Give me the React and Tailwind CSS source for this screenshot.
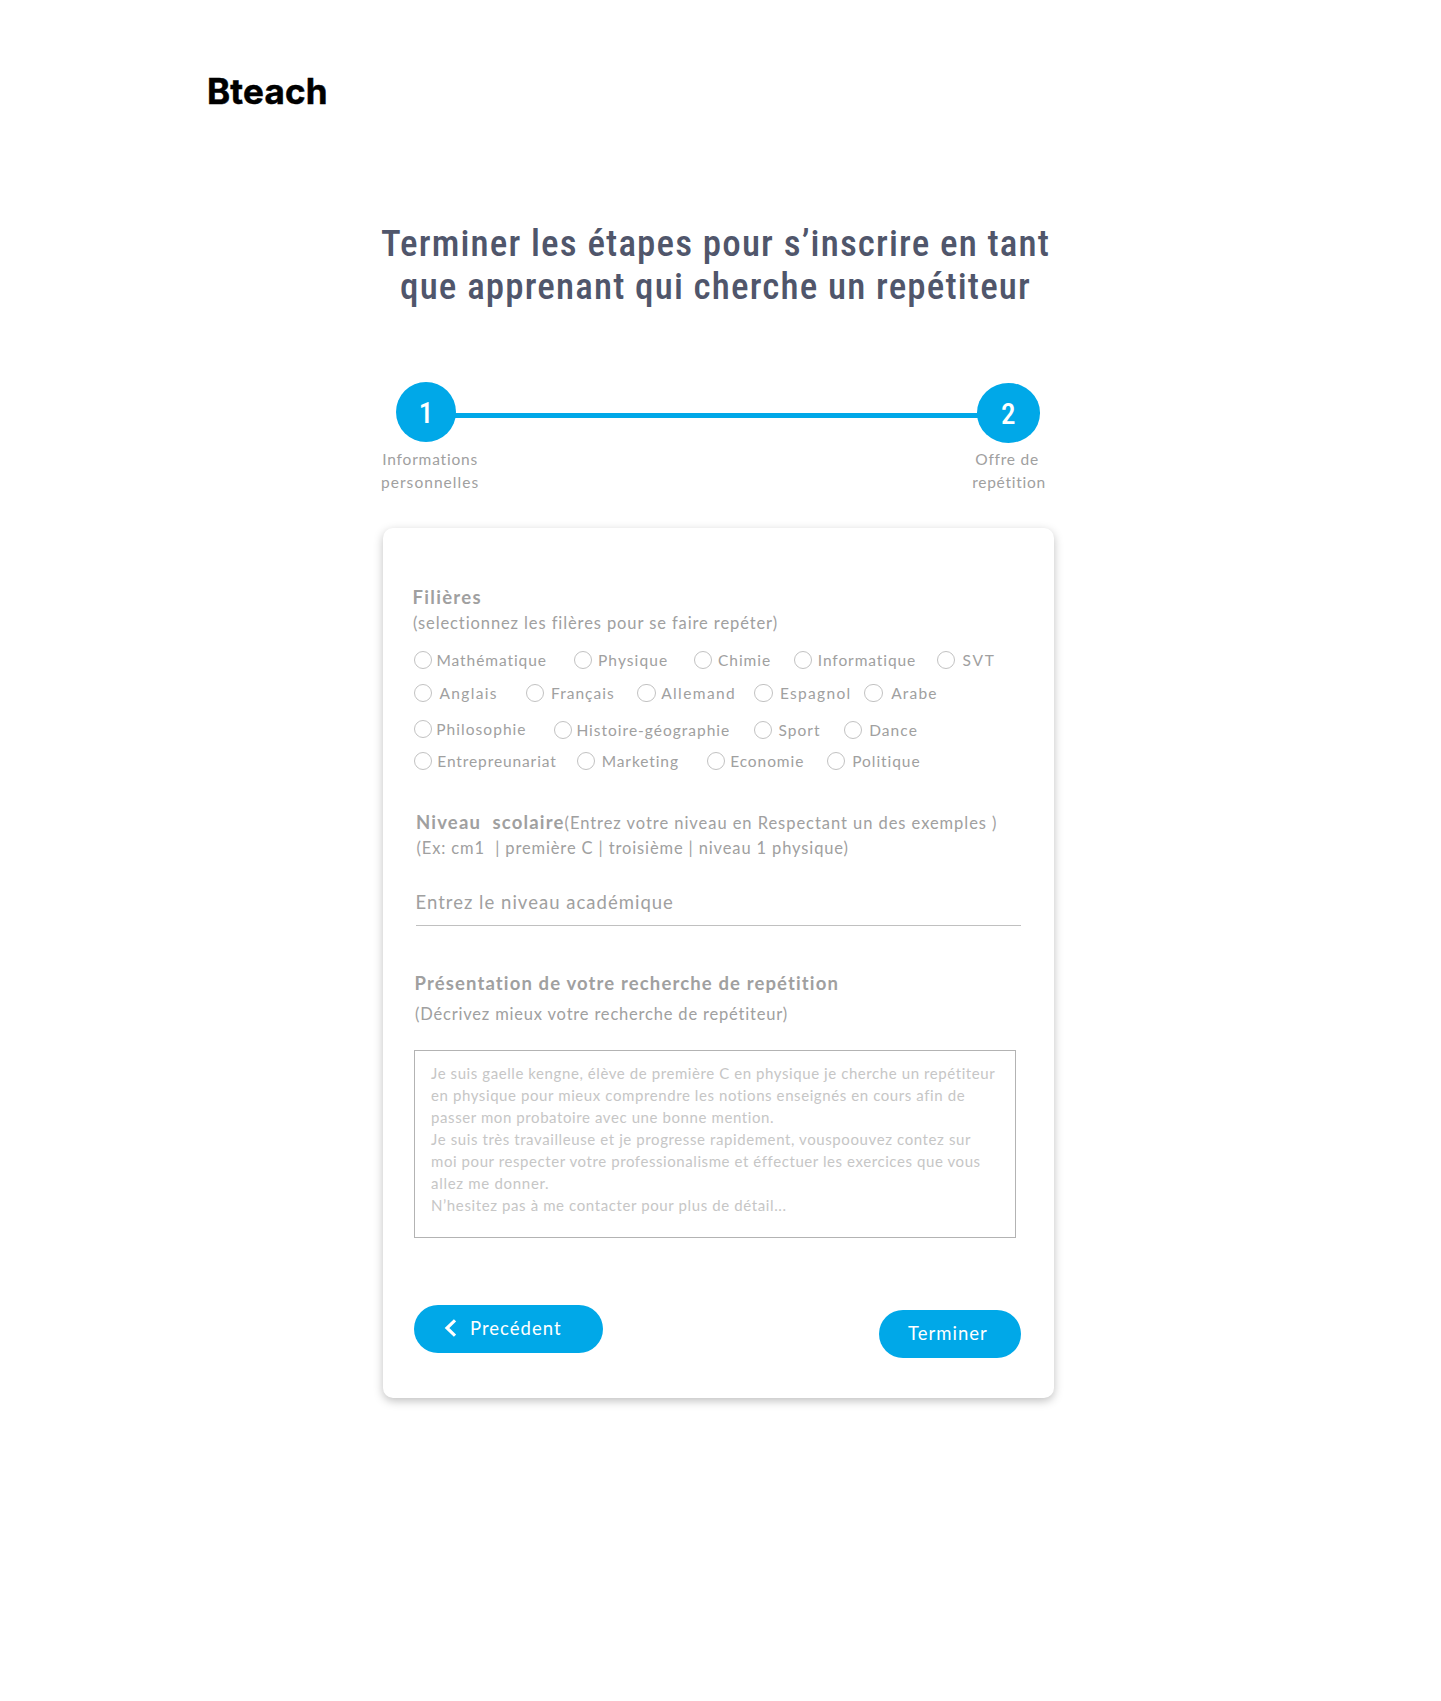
import React from "react";

const optionRows = [
  {
    className: "",
    items: [
      { label: "Mathématique", item: "w-[160px]", text: "ml-[4.5px] tracking-[0.92px]" },
      { label: "Physique", item: "w-[120px]", text: "ml-[6px] tracking-[1.08px]" },
      { label: "Chimie", item: "w-[100px]", text: "ml-[6px] tracking-[0.96px]" },
      { label: "Informatique", item: "w-[143px]", text: "ml-[5.8px] tracking-[0.9px]" },
      { label: "SVT", item: "", text: "ml-[7.5px] tracking-[1.8px]" },
    ],
  },
  {
    className: "mt-[13px]",
    items: [
      { label: "Anglais", item: "w-[112px]", text: "ml-[7.5px] tracking-[1.35px]" },
      { label: "Français", item: "w-[111.7px]", text: "ml-[7px] tracking-[1.03px]" },
      { label: "Allemand", item: "w-[117px]", text: "ml-[5.5px] tracking-[1.4px]" },
      { label: "Espagnol", item: "w-[110px]", text: "ml-[7.3px] tracking-[1.3px]" },
      { label: "Arabe", item: "", text: "ml-[8.5px] tracking-[1.2px]" },
    ],
  },
  {
    className: "mt-[16px]",
    items: [
      { label: "Philosophie", item: "w-[140.4px]", text: "ml-[4.3px] tracking-[1.04px]" },
      { label: "Histoire-géographie", item: "mt-px w-[199.8px]", text: "ml-[4px] tracking-[1px]" },
      { label: "Sport", item: "mt-px w-[90px]", text: "ml-[6.3px] tracking-[1.04px]" },
      { label: "Dance", item: "mt-px", text: "ml-[7px] tracking-[1.07px]" },
    ],
  },
  {
    className: "mt-[11px]",
    items: [
      { label: "Entrepreunariat", item: "w-[163.4px]", text: "ml-[5.3px] tracking-[0.89px]" },
      { label: "Marketing", item: "w-[130px]", text: "ml-[6.3px] tracking-[0.9px]" },
      { label: "Economie", item: "w-[120px]", text: "ml-[4.8px] tracking-[0.92px]" },
      { label: "Politique", item: "", text: "ml-[6.8px] tracking-[0.95px]" },
    ],
  },
];

const presentation = [
  { text: "Je suis gaelle kengne, élève de première C en physique je cherche un repétiteur", tracking: "tracking-[0.58px]" },
  { text: "en physique pour mieux comprendre les notions enseignés en cours afin de", tracking: "tracking-[0.59px]" },
  { text: "passer mon probatoire avec une bonne mention.", tracking: "tracking-[0.59px]" },
  { text: "Je suis très travailleuse et je progresse rapidement, vouspoouvez contez sur", tracking: "tracking-[0.6px]" },
  { text: "moi pour respecter votre professionalisme et éffectuer les exercices que vous", tracking: "tracking-[0.58px]" },
  { text: "allez me donner.", tracking: "tracking-[0.7px]" },
  { text: "N’hesitez pas à me contacter pour plus de détail...", tracking: "tracking-[0.61px]" },
];

function Option({ label, item, text }) {
  return (
    <label className={`flex h-5 shrink-0 items-center ${item}`}>
      <span className="h-[18.5px] w-[18.5px] shrink-0 rounded-full border border-[#c2c2c2]" />
      <span className={`text-[15.5px] leading-5 ${text}`}>{label}</span>
    </label>
  );
}

function Stepper() {
  return (
    <section className="mt-[74px]">
      <div className="flex items-start pl-[13px] font-['Roboto_Condensed',Roboto,sans-serif] text-[29px] font-medium text-white">
        <div className="flex h-[60px] w-[60px] items-center justify-center rounded-full bg-[#00a8e8] pt-[3px]">1</div>
        <div className="-mx-px mt-[31px] h-[5px] w-[522.5px] bg-[#00a8e8]" />
        <div className="mt-px flex h-[60px] w-[63.5px] items-center justify-center rounded-[50%] bg-[#00a8e8] pt-[3px]">2</div>
      </div>
      <div className="-ml-[2px] mt-[5px] flex justify-between text-center text-[15.5px] leading-[23px]">
        <p>
          <span className="block tracking-[0.8px]">Informations</span>
          <span className="block tracking-[1.05px]">personnelles</span>
        </p>
        <p className="mr-2">
          <span className="block pr-[4px] tracking-[0.74px]">Offre de</span>
          <span className="block tracking-[0.75px]">repétition</span>
        </p>
      </div>
    </section>
  );
}

export default function App() {
  return (
    <div className="h-[1701px] w-[1441px] overflow-hidden bg-white font-[Lato,sans-serif] text-[#a0a0a0]">
      <header className="pl-[207px] pt-[68px]">
        <div className="font-[Inter,sans-serif] text-[35px] font-bold leading-[46px] tracking-[0.2px] text-black [-webkit-text-stroke:0.5px_black]">Bteach</div>
      </header>

      <main className="ml-[383px] mt-[108px] w-[671px] whitespace-pre">
        <h1 className="-ml-[10px] w-[685px] text-center font-['Roboto_Condensed',Roboto,sans-serif] text-[37px] font-medium leading-[43px] tracking-[1.14px] text-[#50566b]">
          <span className="block">Terminer les étapes pour s’inscrire en tant</span>
          <span className="block">que apprenant qui cherche un repétiteur</span>
        </h1>

        <Stepper />

        <form className="mt-[34px] h-[870px] rounded-[10px] bg-white pl-[30.5px] pr-[33px] pt-[57px] shadow-[0_3px_10px_rgba(0,0,0,0.25)]">
          <h2 className="-ml-px text-[18.5px] font-bold leading-6 tracking-[1.3px]">Filières</h2>
          <p className="-ml-[0.5px] mt-1 text-[16.5px] leading-5 tracking-[0.9px]">(selectionnez les filères pour se faire repéter)</p>

          <div className="mt-[17px]">
            {optionRows.map((row, i) => (
              <div key={i} className={`flex items-start ${row.className}`}>
                {row.items.map((o) => (
                  <Option key={o.label} {...o} />
                ))}
              </div>
            ))}
          </div>

          <div className="ml-[2.5px] mt-[39px]">
            <p className="h-6 text-[16.5px] leading-6 tracking-[0.95px]">
              <span className="text-[18.5px] font-bold tracking-[1.18px]">Niveau  scolaire</span>
              (Entrez votre niveau en Respectant un des exemples )
            </p>
            <p className="ml-[0.5px] mt-1 text-[16.5px] leading-5 tracking-[0.87px]">
              (Ex: cm1  | première C | troisième | niveau 1 physique)
            </p>
            <div className="mt-8 h-9 w-[605px] border-b border-[#c0c0c0] text-[18.5px] leading-6 tracking-[1.02px]">
              <span className="-ml-[0.5px]">Entrez le niveau académique</span>
            </div>
          </div>

          <div className="ml-px mt-[45px]">
            <h2 className="text-[18.5px] font-bold leading-6 tracking-[1.13px]">
              Présentation de votre recherche de repétition
            </h2>
            <p className="ml-[0.5px] mt-[9px] text-[16.5px] leading-5 tracking-[0.81px]">
              (Décrivez mieux votre recherche de repétiteur)
            </p>
            <div className="-ml-[0.5px] mt-[26px] h-[188px] w-[602px] border border-[#b3b3b3] pl-4 pt-[11px] text-[15px] leading-[22px] text-[#c6c6c6]">
              {presentation.map((line) => (
                <p key={line.text} className={line.tracking}>{line.text}</p>
              ))}
            </div>
          </div>

          <div className="mt-[67px] flex items-start justify-between text-[18.5px] leading-6 text-white">
            <button type="button" className="flex h-[47.5px] w-[189px] items-center rounded-full bg-[#00a8e8] pb-px pl-[30px]">
              <svg className="h-[18px] w-[12px]" viewBox="0 0 12 18" fill="none" stroke="currentColor" strokeWidth="3.2">
                <path d="M11 1.3 3 9l8 7.7" />
              </svg>
              <span className="-mt-px ml-[14.5px] tracking-[1.02px]">Precédent</span>
            </button>
            <button type="button" className="mt-[5px] flex h-[47.5px] w-[142px] items-center rounded-full bg-[#00a8e8] pb-px pl-[29px]">
              <span className="tracking-[1.01px]">Terminer</span>
            </button>
          </div>
        </form>
      </main>
    </div>
  );
}
